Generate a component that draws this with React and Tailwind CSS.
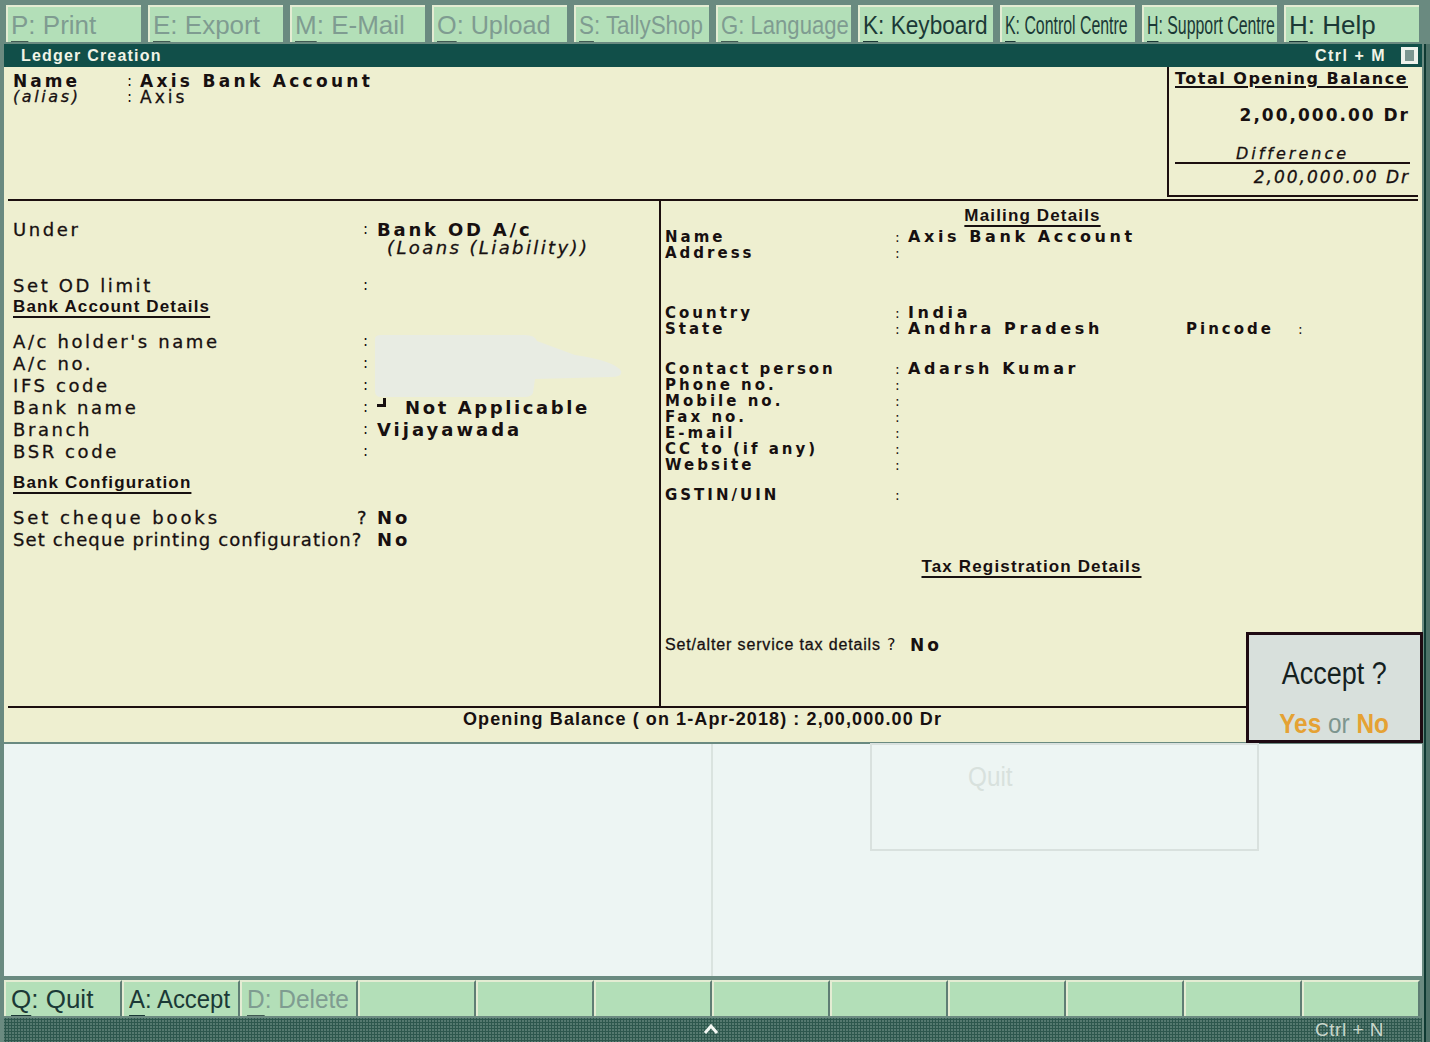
import React from "react";

const DV = "font-['DejaVu_Sans',sans-serif]";
const LS = "font-['Liberation_Sans',Arial,sans-serif]";
const INK = "text-[#171010]";
const STROKE = "[-webkit-text-stroke:0.3px_#171010]";

const topButtons = [
  { k: "P", r: "Print", en: false, s: "" },
  { k: "E", r: "Export", en: false, s: "" },
  { k: "M", r: "E-Mail", en: false, s: "" },
  { k: "O", r: "Upload", en: false, s: "scale-x-[0.97]" },
  { k: "S", r: "TallyShop", en: false, s: "scale-x-[0.86]" },
  { k: "G", r: "Language", en: false, s: "scale-x-[0.85]" },
  { k: "K", r: "Keyboard", en: true, s: "scale-x-[0.87]" },
  { k: "K", r: "Control Centre", en: true, s: "scale-x-[0.61]" },
  { k: "H", r: "Support Centre", en: true, s: "scale-x-[0.61]" },
  { k: "H", r: "Help", en: true, s: "" },
];

const bottomButtons = [
  { k: "Q", r: "Quit", en: true, s: "" },
  { k: "A", r: "Accept", en: true, s: "scale-x-[0.92]" },
  { k: "D", r: "Delete", en: false, s: "scale-x-[0.94]" },
  null, null, null, null, null, null, null, null, null,
];

function BtnLabel({ b }) {
  return (
    <span
      className={`inline-block origin-left whitespace-nowrap ${LS} text-[26px] leading-none ${b.s} ${
        b.en ? "text-[#1b3936]" : "text-[#7f9c91]"
      }`}
    >
      <span
        className={`underline decoration-2 underline-offset-[7px] ${
          b.en ? "decoration-double decoration-[#1b3936]" : "decoration-[#405a52]"
        }`}
      >
        {b.k}
      </span>
      : {b.r}
    </span>
  );
}

function LRow({ label, value, sep = ":" }) {
  return (
    <div className="h-[22px] flex items-center whitespace-nowrap">
      <span className={`w-[350px] ${DV} text-[18px] tracking-[2.6px] ${INK} ${STROKE}`}>{label}</span>
      <span className={`w-[14px] ${DV} text-[15px] ${INK}`}>{sep}</span>
      {value && <span className={`${DV} text-[18px] font-bold tracking-[3px] ${INK}`}>{value}</span>}
    </div>
  );
}

function RRow({ label, value, children }) {
  return (
    <div className="h-[16px] flex items-center whitespace-nowrap">
      <span className={`w-[230px] ${DV} text-[15px] font-bold tracking-[3px] ${INK} leading-[16px]`}>{label}</span>
      <span className={`w-[13px] ${DV} text-[14px] ${INK} leading-[16px]`}>:</span>
      {value && (
        <span className={`${DV} text-[16px] font-bold tracking-[3.6px] ${INK} leading-[16px]`}>{value}</span>
      )}
      {children}
    </div>
  );
}

function Heading({ children }) {
  return (
    <span
      className={`${LS} text-[17px] font-bold tracking-[1.15px] ${INK} underline decoration-2 underline-offset-[4px]`}
    >
      {children}
    </span>
  );
}

export default function App() {
  return (
    <div className="w-[1430px] h-[1042px] bg-[#6a8a80] flex flex-col relative overflow-hidden">
      {/* Top toolbar */}
      <div className="h-[44px] flex gap-[7px] pl-[6px] pt-[5px]">
        {topButtons.map((b, i) => (
          <div
            key={i}
            className="w-[135px] h-[37px] bg-[#b3dfb8] border-t-2 border-l-2 border-[#e4ecd3] overflow-hidden flex items-center pl-[3px]"
          >
            <BtnLabel b={b} />
          </div>
        ))}
      </div>

      <div className="flex flex-1">
        <div className="w-[4px]" />
        <div className="flex-1 flex flex-col">
          {/* Title bar */}
          <div className="h-[23px] bg-[#114f49] flex items-center pl-[17px] pr-[4px]">
            <span className={`${LS} font-bold text-[16px] tracking-[1.2px] text-[#f1f4e6]`}>Ledger Creation</span>
            <span className={`ml-auto ${LS} font-bold text-[16px] tracking-[1.5px] text-[#f1f4e6]`}>Ctrl + M</span>
            <div className="ml-[15px] w-[17px] h-[17px] bg-[#eef2ec] flex items-center justify-center">
              <div className="w-[9px] h-[11px] bg-[#7c9691]" />
            </div>
          </div>

          {/* Cream form */}
          <div className="h-[675px] bg-[#eeefd0] flex flex-col">
            {/* Top section */}
            <div className="h-[130px] flex">
              <div className="flex-1 pl-[9px] pt-[6px] flex flex-col">
                <div className="h-[16px] flex items-center whitespace-nowrap">
                  <span className={`w-[114px] ${DV} text-[17px] font-bold tracking-[3px] ${INK} leading-[16px]`}>Name</span>
                  <span className={`w-[13px] ${DV} text-[15px] ${INK} leading-[16px]`}>:</span>
                  <span className={`${DV} text-[17px] font-bold tracking-[3.3px] ${INK} leading-[16px]`}>Axis Bank Account</span>
                </div>
                <div className="h-[16px] flex items-center whitespace-nowrap">
                  <span className={`w-[114px] ${DV} text-[16px] italic tracking-[2.6px] ${INK} ${STROKE} leading-[16px]`}>(alias)</span>
                  <span className={`w-[13px] ${DV} text-[15px] ${INK} leading-[16px]`}>:</span>
                  <span className={`${DV} text-[17px] tracking-[3px] ${INK} ${STROKE} leading-[16px]`}>Axis</span>
                </div>
              </div>
              <div className="w-[251px] mr-[4px] border-l-2 border-b-2 border-[#1c0f0f] pl-[6px] pr-[8px] flex flex-col">
                <div className="h-[3px]" />
                <div className="h-[18px] flex items-center whitespace-nowrap">
                  <span className={`${DV} text-[16px] font-bold tracking-[1.5px] ${INK} underline decoration-2 underline-offset-[2px] leading-[18px]`}>
                    Total Opening Balance
                  </span>
                </div>
                <div className="h-[18px]" />
                <div className={`h-[18px] text-right ${DV} text-[17px] font-bold tracking-[2px] ${INK} leading-[18px] whitespace-nowrap`}>
                  2,00,000.00 Dr
                </div>
                <div className="h-[22px]" />
                <div className={`h-[16px] text-center ${DV} text-[16px] italic tracking-[3px] ${INK} ${STROKE} leading-[16px]`}>Difference</div>
                <div className="h-[2px] bg-[#1c0f0f]" />
                <div className="h-[4px]" />
                <div className={`h-[18px] text-right ${DV} text-[17px] italic tracking-[2px] ${INK} ${STROKE} leading-[18px] whitespace-nowrap`}>
                  2,00,000.00 Dr
                </div>
              </div>
            </div>
            <div className="h-[2px]" />
            <div className="h-[2px] mx-[4px] bg-[#1c0f0f]" />

            {/* Body */}
            <div className="h-[505px] mx-[4px] flex">
              {/* Left column */}
              <div className="w-[653px] border-r-2 border-[#1c0f0f] pl-[5px] flex flex-col relative">
                <div className="h-[19px]" />
                <div className="h-[18px] flex items-center whitespace-nowrap">
                  <span className={`w-[350px] ${DV} text-[18px] tracking-[2.6px] ${INK} ${STROKE}`}>Under</span>
                  <span className={`w-[14px] ${DV} text-[15px] ${INK}`}>:</span>
                  <span className={`${DV} text-[18px] font-bold tracking-[2.8px] ${INK}`}>Bank OD A/c</span>
                </div>
                <div className="h-[18px] flex items-center pl-[374px] whitespace-nowrap">
                  <span className={`${DV} text-[18px] italic tracking-[2.4px] ${INK} ${STROKE}`}>(Loans (Liability))</span>
                </div>
                <div className="h-[18px]" />
                <LRow label="Set OD limit" />
                <div className="h-[22px] flex items-center">
                  <Heading>Bank Account Details</Heading>
                </div>
                <div className="h-[12px]" />
                <LRow label="A/c holder's name" />
                <LRow label="A/c no." />
                <LRow label="IFS code" />
                <div className="h-[22px] flex items-center whitespace-nowrap">
                  <span className={`w-[350px] ${DV} text-[18px] tracking-[2.6px] ${INK} ${STROKE}`}>Bank name</span>
                  <span className={`w-[14px] ${DV} text-[15px] ${INK}`}>:</span>
                  <div className="w-[28px] self-start pt-[2px]">
                    <div className="w-[9px] h-[9px] border-r-[3px] border-b-[3px] border-[#171010]" />
                  </div>
                  <span className={`${DV} text-[18px] font-bold tracking-[2.6px] ${INK}`}>Not Applicable</span>
                </div>
                <LRow label="Branch" value="Vijayawada" />
                <LRow label="BSR code" />
                <div className="h-[10px]" />
                <div className="h-[22px] flex items-center">
                  <Heading>Bank Configuration</Heading>
                </div>
                <div className="h-[12px]" />
                <div className="h-[22px] flex items-center whitespace-nowrap">
                  <span className={`w-[344px] ${DV} text-[18px] tracking-[2.9px] ${INK} ${STROKE}`}>Set cheque books</span>
                  <span className={`w-[20px] ${DV} text-[18px] ${INK} ${STROKE}`}>?</span>
                  <span className={`${DV} text-[18px] font-bold tracking-[3px] ${INK}`}>No</span>
                </div>
                <div className="h-[22px] flex items-center whitespace-nowrap">
                  <span className={`w-[364px] ${DV} text-[18px] tracking-[1.1px] ${INK} ${STROKE}`}>Set cheque printing configuration?</span>
                  <span className={`${DV} text-[18px] font-bold tracking-[3px] ${INK}`}>No</span>
                </div>

                {/* faint smudge over blurred values */}
                <svg className="absolute left-[367px] top-[134px]" width="250" height="62" viewBox="0 0 250 62">
                  <path
                    d="M0 4 Q0 0 6 0 L150 0 Q160 0 162 6 L200 20 Q240 26 246 36 Q248 42 236 42 L160 44 L158 58 Q156 62 150 62 L6 62 Q0 62 0 56 Z"
                    fill="#e8ece3"
                  />
                </svg>
              </div>

              {/* Right column */}
              <div className="flex-1 pl-[4px] flex flex-col">
                <div className="h-[4px]" />
                <div className="h-[22px] flex items-center justify-center pr-[18px]">
                  <Heading>Mailing Details</Heading>
                </div>
                <div className="h-[2px]" />
                <RRow label="Name" value="Axis Bank Account" />
                <RRow label="Address" />
                <div className="h-[44px]" />
                <RRow label="Country" value="India" />
                <RRow label="State" value="Andhra Pradesh">
                  <span className={`ml-auto w-[232px] ${DV} text-[15px] font-bold tracking-[3px] ${INK} leading-[16px] flex`}>
                    <span className="w-[112px]">Pincode</span>
                    <span className="text-[14px] font-normal">:</span>
                  </span>
                </RRow>
                <div className="h-[24px]" />
                <RRow label="Contact person" value="Adarsh Kumar" />
                <RRow label="Phone no." />
                <RRow label="Mobile no." />
                <RRow label="Fax no." />
                <RRow label="E-mail" />
                <RRow label="CC to (if any)" />
                <RRow label="Website" />
                <div className="h-[14px]" />
                <RRow label="GSTIN/UIN" />
                <div className="h-[53px]" />
                <div className="h-[22px] flex items-center justify-center pr-[20px]">
                  <Heading>Tax Registration Details</Heading>
                </div>
                <div className="h-[59px]" />
                <div className="h-[16px] flex items-center whitespace-nowrap">
                  <span className={`w-[222px] ${LS} text-[16px] tracking-[0.85px] ${INK} ${STROKE} leading-[16px]`}>
                    Set/alter service tax details
                  </span>
                  <span className={`w-[23px] ${DV} text-[16px] ${INK} leading-[16px]`}>?</span>
                  <span className={`${DV} text-[17px] font-bold tracking-[3px] ${INK} leading-[16px]`}>No</span>
                </div>
              </div>
            </div>

            <div className="h-[2px] mx-[4px] bg-[#1c0f0f]" />
            <div className="flex-1 pl-[459px] pt-[1px] flex items-start whitespace-nowrap">
              <span className={`${LS} text-[18px] leading-[20px] font-bold tracking-[1.1px] ${INK}`}>
                Opening Balance ( on 1-Apr-2018) : 2,00,000.00 Dr
              </span>
            </div>
          </div>

          <div className="h-[2px] bg-[#6a8a80]" />

          {/* Lower empty area */}
          <div className="h-[232px] bg-[#edf5f3] relative">
            <div className="absolute left-[707px] top-0 bottom-0 w-[2px] bg-[#dae3df]" />
            <div className="absolute left-[866px] top-[-1px] w-[389px] h-[108px] border-2 border-[#d9e1de] pl-[96px] pt-[12px]">
              <span className={`${LS} text-[27px] text-[#d8e1dd] scale-x-[0.9] inline-block origin-left`}>Quit</span>
            </div>
          </div>

          <div className="h-[4px]" />

          {/* Bottom toolbar */}
          <div className="h-[36px] flex">
            {bottomButtons.map((b, i) => (
              <div
                key={i}
                className="w-[118px] h-[36px] bg-[#b3dfb8] border-t-2 border-l-2 border-[#e4ecd3] border-r-2 border-r-[#5f7e74] overflow-hidden flex items-center pl-[5px]"
              >
                {b && <BtnLabel b={b} />}
              </div>
            ))}
          </div>

          <div className="h-[2px]" />

          {/* Status strip */}
          <div className="h-[24px] bg-[#55796f] bg-[radial-gradient(#2d574d_1px,transparent_1.2px)] bg-[length:3px_3px] flex items-center relative">
            <svg className="absolute left-[699px] top-[5px]" width="16" height="12" viewBox="0 0 16 12">
              <polyline points="2,10 8,3 14,10" fill="none" stroke="#f4f8f4" strokeWidth="3" />
            </svg>
            <span className={`ml-auto mr-[38px] ${LS} text-[19px] text-[#c9d6cb] tracking-[0.5px]`}>Ctrl + N</span>
          </div>
        </div>
        <div className="w-[8px] flex">
          <div className="w-[2px]" />
          <div className="w-[2px] bg-[#0f3a33]" />
          <div className="flex-1 bg-[#4d7168]" />
        </div>
      </div>

      {/* Accept dialog */}
      <div className="absolute left-[1246px] top-[632px] w-[177px] h-[111px] border-[3px] border-[#1e0a12] bg-[#d8e0dc] flex flex-col items-center">
        <div className="h-[22px]" />
        <span className={`${LS} text-[31px] leading-[34px] text-[#14201e] scale-x-[0.87] inline-block whitespace-nowrap`}>Accept ?</span>
        <div className="h-[18px]" />
        <span className={`${LS} text-[28px] leading-[30px] scale-x-[0.87] inline-block whitespace-nowrap`}>
          <span className="font-bold text-[#e5a234]">Yes</span>
          <span className="text-[#7d958e]"> or </span>
          <span className="font-bold text-[#e5a234]">No</span>
        </span>
      </div>
    </div>
  );
}
